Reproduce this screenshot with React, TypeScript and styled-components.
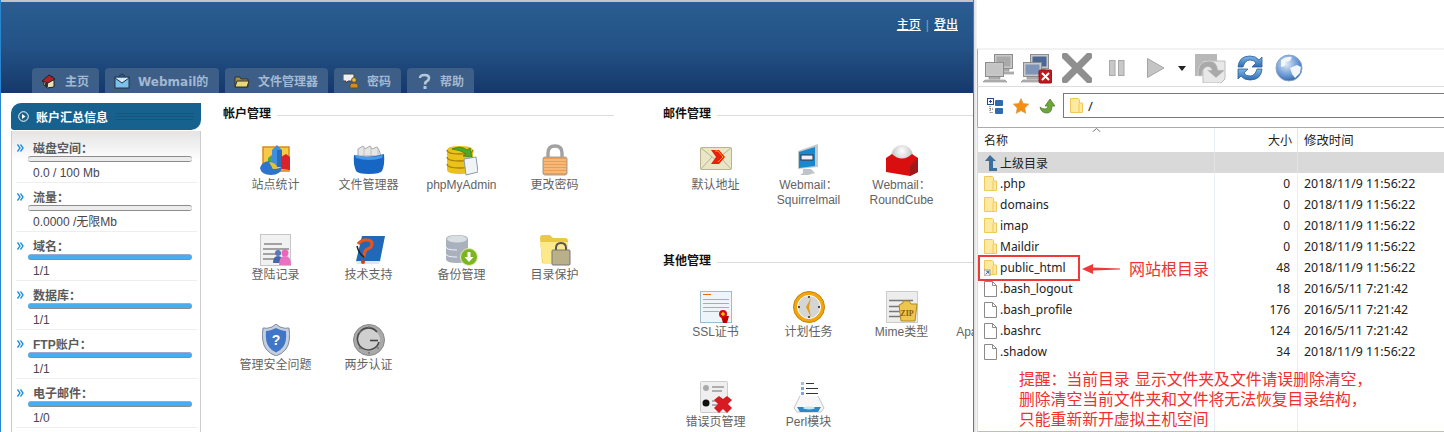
// App.tsx
import React from "react";
import styled, { createGlobalStyle } from "styled-components";

const GlobalStyle = createGlobalStyle`
  html, body {
    margin: 0;
    padding: 0;
    width: 1444px;
    height: 432px;
    overflow: hidden;
    background: #fff;
    font-family: "Liberation Sans", "Noto Sans CJK SC", sans-serif;
    font-size: 12px;
  }
`;

const Page = styled.div`
  display: flex;
  width: 1444px;
  height: 432px;
  overflow: hidden;
`;

/* ---------- left: control panel ---------- */

const PanelPane = styled.div`
  width: 972px;
  height: 432px;
  flex: none;
  box-sizing: content-box;
  border-left: 1px solid #2a86d0;
  border-right: 1px solid #2a86d0;
  overflow: hidden;
  display: flex;
  flex-direction: column;
`;

const Banner = styled.div`
  height: 91px;
  flex: none;
  border-top: 2px solid #c4c4c4;
  background: linear-gradient(#2a5d91, #235286 50%, #16386a);
  display: flex;
  flex-direction: column;
  justify-content: space-between;
`;

const TopLinks = styled.div`
  display: flex;
  justify-content: flex-end;
  align-items: center;
  gap: 5px;
  padding: 15px 15px 0 0;
  color: #7fa0c4;
  line-height: 16px;
`;

const TopLink = styled.a`
  color: #fff;
  text-decoration: underline;
  font-weight: 500;
`;

const Tabs = styled.div`
  display: flex;
  gap: 6px;
  padding-left: 31px;
`;

const Tab = styled.div<{ $w: number }>`
  width: ${(p) => p.$w}px;
  height: 25px;
  box-sizing: border-box;
  padding-left: 9px;
  background: #3c5e87;
  border-radius: 4px 4px 0 0;
  color: #a3b8d3;
  font-family: "DejaVu Sans", "Noto Sans CJK SC", sans-serif;
  font-weight: 700;
  display: flex;
  align-items: center;
  gap: 8px;
  white-space: nowrap;
`;

const PanelBody = styled.div`
  flex: 1;
  display: flex;
  min-height: 0;
`;

const Sidebar = styled.div`
  width: 190px;
  flex: none;
  margin: 10px 0 0 10px;
  display: flex;
  flex-direction: column;
`;

const SideHead = styled.div`
  height: 27px;
  flex: none;
  background: #17618f;
  border-radius: 10px 0 10px 3px;
  color: #fff;
  font-weight: 700;
  display: flex;
  align-items: center;
  padding-left: 7px;
  gap: 7px;
`;

const SideHeadRules = styled.div`
  flex: 1;
  height: 8px;
  margin-right: 7px;
  background: repeating-linear-gradient(#15567f 0 1px, transparent 1px 3px);
`;

const SideList = styled.div`
  flex: 1;
  margin-top: 1px;
  padding: 3px 3px 0 4px;
  border-left: 1px solid #ccc;
  border-right: 1px solid #ccc;
  background: linear-gradient(#e4e4e4, #fff 30px);
`;

const StatRow = styled.div`
  height: 49px;
  box-sizing: border-box;
  padding-top: 7px;
  border-bottom: 1px solid #eee;
`;

const StatHead = styled.div`
  display: flex;
  align-items: center;
  height: 14px;
  box-sizing: border-box;
  padding: 0 0 2px 1px;
  gap: 9px;
  color: #5a5a5a;
  font-weight: 700;
`;

const StatChevron = styled.svg`
  margin-top: 1px;
`;

const StatBar = styled.div<{ $full: boolean }>`
  width: 164px;
  height: 6px;
  box-sizing: border-box;
  margin: 1px 0 3px 12px;
  border-radius: 3px;
  border-bottom: 1px solid #8c8c8c;
  border-top: 1px solid ${(p) => (p.$full ? "#9ac" : "#8c8c8c")};
  background: ${(p) => (p.$full ? "#46aeee" : "#ececec")};
`;

const StatValue = styled.div`
  height: 14px;
  line-height: 17px;
  margin-left: 17px;
  color: #4a4450;
`;

const Content = styled.div`
  flex: 1;
  display: flex;
  gap: 49px;
  padding: 12px 0 0 22px;
  min-width: 0;
`;

const LeftColumn = styled.div`
  width: 391px;
  flex: none;
`;

const RightColumn = styled.div`
  width: 400px;
  flex: none;
`;

const SectionTitle = styled.div`
  display: flex;
  height: 14px;
  line-height: 19px;
  color: #111;
  font-weight: 700;
  gap: 6px;
  margin-bottom: 25px;
  white-space: nowrap;
`;

const TitleRule = styled.div`
  flex: 1;
  height: 1px;
  margin-top: 10px;
  background: #dcdcdc;
`;

const IconGrid = styled.div<{ $after?: number }>`
  display: grid;
  grid-template-columns: repeat(4, 93px);
  grid-auto-rows: 90px;
  margin-left: 6px;
  margin-bottom: ${(p) => p.$after ?? 0}px;
`;

const IconCell = styled.div`
  display: flex;
  flex-direction: column;
  align-items: center;
  text-align: center;
  color: #636363;
  line-height: 14.5px;
  white-space: nowrap;
`;

const IconBox = styled.div`
  height: 32px;
  margin-bottom: 2px;
  display: flex;
  align-items: center;
  justify-content: center;
`;

/* ---------- right: ftp client ---------- */

const ClientPane = styled.div`
  flex: 1;
  min-width: 0;
  height: 432px;
  position: relative;
  display: flex;
  overflow: hidden;
  font-family: "Noto Sans", "Noto Sans CJK SC", sans-serif;
`;

const EdgeShade = styled.div`
  width: 3px;
  flex: none;
  background: linear-gradient(90deg, #dcdcdc, #f6f6f6);
`;

const ClientMain = styled.div`
  flex: 1;
  min-width: 0;
  display: flex;
  flex-direction: column;
`;

const TitleGap = styled.div`
  height: 48px;
  flex: none;
`;

const Toolbar = styled.div`
  height: 36px;
  flex: none;
  display: flex;
  align-items: center;
  padding-left: 5px;
  border-top: 2px solid #f2f2f2;
  border-bottom: 1px solid #ddd;
  border-left: 1px solid #aaa;
`;

const ToolSlot = styled.div<{ $ml: number }>`
  margin-left: ${(p) => p.$ml}px;
  display: flex;
  align-items: center;
`;

const AddressRow = styled.div`
  height: 40px;
  flex: none;
  box-sizing: border-box;
  display: flex;
  align-items: center;
  gap: 10px;
  padding: 0 0 3px 9px;
  border-left: 1px solid #aaa;
`;

const AddressInput = styled.div`
  flex: 1;
  height: 25px;
  box-sizing: border-box;
  margin-left: -2px;
  margin-right: -2px;
  border: 1.5px solid #7a7a7a;
  display: flex;
  align-items: center;
  gap: 5px;
  padding-left: 6px;
  color: #123;
  font-size: 13px;
`;

const FileTable = styled.div`
  flex: 1;
  border-top: 1px solid #aaa;
  border-left: 1px solid #ddd;
  border-bottom: 1px solid #b7d45c;
  display: flex;
  flex-direction: column;
  position: relative;
`;

const SortCaret = styled.svg`
  position: absolute;
  left: 114px;
  top: 0;
`;

const GridRow = styled.div<{ $h: number; $bg?: string }>`
  height: ${(p) => p.$h}px;
  flex: none;
  display: grid;
  grid-template-columns: 237px 83px 1fr;
  background: ${(p) => p.$bg ?? "transparent"};
  color: #222;
`;

const NameCell = styled.div<{ $line?: string }>`
  display: flex;
  align-items: center;
  padding-left: 6px;
  gap: 3px;
  border-right: 1px solid ${(p) => p.$line ?? "#e8eef4"};
`;

const SizeCell = styled.div<{ $line?: string; $pad?: number }>`
  display: flex;
  align-items: center;
  justify-content: flex-end;
  padding-right: ${(p) => p.$pad ?? 7}px;
  border-right: 1px solid ${(p) => p.$line ?? "#e8eef4"};
`;

const DateCell = styled.div`
  display: flex;
  align-items: center;
  padding-left: 6px;
  white-space: nowrap;
  font-size: 12.4px;
`;

const FillColumns = styled(GridRow)`
  flex: 1;
`;

const FileIconBox = styled.div`
  width: 13px;
  height: 16px;
  flex: none;
  display: flex;
  align-items: center;
`;

const RedBox = styled.div`
  position: absolute;
  left: 4px;
  top: 255px;
  width: 102px;
  height: 26px;
  box-sizing: border-box;
  border: 2.5px solid #f03a3a;
`;

const RedArrow = styled.svg`
  position: absolute;
  left: 108px;
  top: 264px;
`;

const RootNote = styled.div`
  position: absolute;
  left: 155px;
  top: 257px;
  color: #f03030;
  font-family: "Noto Sans CJK SC", sans-serif;
  font-size: 16px;
  line-height: 22px;
  white-space: nowrap;
`;

const WarnNote = styled.div`
  position: absolute;
  left: 45px;
  top: 369px;
  color: #f03030;
  font-family: "Noto Sans CJK SC", sans-serif;
  font-size: 15.8px;
  line-height: 20px;
  word-spacing: 2px;
  white-space: nowrap;
`;

/* ---------- tab and sidebar drawings ---------- */

const HouseIcon = () => (
  <svg width="16" height="16" viewBox="0 0 16 16">
    <path d="M3 8l8-5 2 5v6l-7 1-3-3z" fill="#e9e2b8" stroke="#222" />
    <path d="M1 8l7-6 6 4-7 4z" fill="#b3202a" stroke="#222" />
    <rect x="4" y="10" width="3" height="4" fill="#333" />
  </svg>
);
const MailIcon = () => (
  <svg width="16" height="16" viewBox="0 0 16 16">
    <path d="M5 3l3-2 3 2" fill="none" stroke="#234" />
    <rect x="1" y="4" width="14" height="11" fill="#7cc0ec" stroke="#234" />
    <path d="M1 5l7 5 7-5" fill="#cfe8fa" stroke="#234" />
  </svg>
);
const FolderTabIcon = () => (
  <svg width="16" height="16" viewBox="0 0 16 16">
    <path d="M1 4h5l1 2h7v8H1z" fill="#a48f3e" stroke="#333" />
    <path d="M1 14l2-6h12l-2 6z" fill="#e8d87c" stroke="#333" />
  </svg>
);
const PasswordTabIcon = () => (
  <svg width="16" height="16" viewBox="0 0 16 16">
    <path d="M0 1h11v7H5l-2 2V8H0z" fill="#eee" stroke="#444" />
    <circle cx="11" cy="7" r="2.4" fill="#f1b43a" stroke="#553" />
    <path d="M7 15v-3q0-2 4-2t4 2v3z" fill="#d98a1f" stroke="#553" />
  </svg>
);
const HelpTabIcon = () => (
  <svg width="16" height="16" viewBox="0 0 16 16">
    <path d="M4 5q0-3 4.500-3T13 5q0 2-2.500 3.500Q9 9.300 9 11.500" fill="none" stroke="#b4c8dc" strokeWidth="2.600" />
    <rect x="7.500" y="13" width="3" height="3" fill="#b4c8dc" />
  </svg>
);
const PlayCircle = () => (
  <svg width="11" height="11" viewBox="0 0 11 11">
    <circle cx="5.500" cy="5.500" r="4.800" fill="none" stroke="#fff" />
    <path d="M4 3l3.500 2.500L4 8z" fill="#fff" />
  </svg>
);
const DoubleChevron = () => (
  <StatChevron width="7" height="8" viewBox="0 0 7 8">
    <path d="M.5.500L3 4 .5 7.500M3.500.500L6 4 3.500 7.500" fill="none" stroke="#1b8fdc" strokeWidth="1.300" />
  </StatChevron>
);

/* ---------- control panel drawings ---------- */

const StatsIcon = () => (
  <svg width="32" height="32" viewBox="0 0 32 32">
    <rect x="3" y="3" width="26" height="24" fill="#f6c948" stroke="#d98a1c" strokeWidth="1.500" />
    <path d="M8 14l5-4v12H8z" fill="#4aa84a" />
    <path d="M12 6l5-5 5 5v17H12z" fill="#3f8fe0" />
    <path d="M17 6h5v17h-5z" fill="#2c6cbc" />
    <path d="M21 13l5-3 4 3v13l-9-1z" fill="#d8232a" />
    <path d="M0 24q2-7 10-7l3 8q5 0 9-2-1 8-11 8T0 24z" fill="#2f74cc" />
    <path d="M9 18l4 7 5-1q-3-6-9-6z" fill="#e8c22c" />
  </svg>
);
const FileBoxIcon = () => (
  <svg width="32" height="32" viewBox="0 0 32 32">
    <path d="M5 12V5l5-3 2 3 5-3 2 3 5-2 2 3 2 6z" fill="#e6e6e6" stroke="#a8a8a8" />
    <path d="M11 3v8M18 3v8M25 4v7" stroke="#c0c0c0" />
    <path d="M1 11q14 4 30-1 1 11-2 17-2 3-13 3T3 27Q0 20 1 11z" fill="#1766c4" />
    <path d="M2 11q14 4 28 0l-1 3q-13 4-26 0z" fill="#4a9ae8" />
  </svg>
);
const PhpAdminIcon = () => (
  <svg width="32" height="32" viewBox="0 0 32 32">
    <path d="M1 6q0-4 13-4t13 4v20q0 4-13 4T1 26z" fill="#eac21a" />
    <path d="M1 6q0 4 13 4t13-4M1 13q0 4 13 4t13-4M1 20q0 4 13 4t13-4" fill="none" stroke="#a9810c" strokeWidth="1.300" />
    <path d="M6 5q9-4 15 1l3-2 2 9-9-1 3-2q-5-4-14-5z" fill="#4fa82e" stroke="#2f7a18" strokeWidth=".7" />
    <path d="M18 15l12-2 2 15-12 3z" fill="#f1f4f6" stroke="#8a9aa6" />
  </svg>
);
const LockIcon = () => (
  <svg width="32" height="32" viewBox="0 0 32 32">
    <path d="M9 14V9q0-7 7-7t7 7v5" fill="none" stroke="#a2a2a2" strokeWidth="3.400" />
    <rect x="4" y="13" width="24" height="18" rx="2" fill="#ed9c52" stroke="#a8a098" />
    <path d="M5 16h22M5 19h22M5 22h22M5 25h22M5 28h22" stroke="#fbd6a4" />
  </svg>
);
const LoginLogIcon = () => (
  <svg width="32" height="32" viewBox="0 0 32 32">
    <rect x=".5" y=".5" width="30" height="31" fill="#f1f1f1" stroke="#c6c6c6" />
    <path d="M4 10h18M3 15h26M3 20h18M3 25h14" stroke="#888" strokeWidth="1.400" />
    <circle cx="18" cy="19" r="3" fill="#5a78b8" />
    <path d="M13 29q0-7 5-7t5 7z" fill="#4466aa" />
    <circle cx="25" cy="19" r="3.500" fill="#e866b8" />
    <path d="M19 31q0-9 6-9t6 9z" fill="#ec70c2" />
  </svg>
);
const BookIcon = () => (
  <svg width="32" height="32" viewBox="0 0 32 32">
    <path d="M9 2h23l-5 25H3z" fill="#2168b8" />
    <path d="M3 27h24l-1 3H4z" fill="#dfe6ee" />
    <path d="M5 10q4-5 10-4t3 7l-5 3q-2 2-2 7" fill="none" stroke="#e4561c" strokeWidth="3.200" />
    <path d="M4 12q2 8 7 11" fill="none" stroke="#222" strokeWidth="1.500" />
    <circle cx="10" cy="28" r="2" fill="#d23f12" />
  </svg>
);
const BackupIcon = () => (
  <svg width="32" height="32" viewBox="0 0 32 32">
    <path d="M0 5q0-4 11-4t11 4v20q0 4-11 4T0 25z" fill="#a9b2bc" />
    <ellipse cx="11" cy="5" rx="10" ry="3.500" fill="#d9dee3" />
    <path d="M0 13q0 3 11 3M0 20q0 3 11 3" fill="none" stroke="#eef" />
    <circle cx="23" cy="23" r="8.500" fill="#7cb51e" stroke="#e4f0c0" />
    <path d="M21.500 18h3v5h3l-4.500 5-4.500-5h3z" fill="#fff" />
  </svg>
);
const ProtectIcon = () => (
  <svg width="32" height="32" viewBox="0 0 32 32">
    <path d="M1 4q0-3 3-3h7l3 3h12q3 0 3 3v22H3z" fill="#e9c84a" />
    <path d="M1 8h28l1 22H4z" fill="#fbe98a" />
    <path d="M17 17v-3q0-5 5-5t5 5v3" fill="none" stroke="#555" strokeWidth="2" />
    <rect x="13" y="16" width="18" height="15" rx="1" fill="#b9b08a" stroke="#777" />
  </svg>
);
const ShieldIcon = () => (
  <svg width="32" height="32" viewBox="0 0 32 32">
    <path d="M16 0l4 3q5 2 9 1 2 14-3 21-4 5-10 7-6-2-10-7Q1 18 3 4q4 1 9-1z" fill="#c6cfe0" stroke="#7d88a0" />
    <path d="M16 4q6 3 10 3 1 11-3 16-3 4-7 5.500Q12 27 9 23 5 18 6 7q4 0 10-3z" fill="#3f76c8" />
    <text x="16" y="21" fontSize="14" fontWeight="700" fill="#fff" textAnchor="middle" fontFamily="Liberation Sans, sans-serif">?</text>
  </svg>
);
const TwoStepIcon = () => (
  <svg width="32" height="32" viewBox="0 0 32 32">
    <circle cx="16" cy="16" r="15.500" fill="#a9a9a9" stroke="#8a8a8a" />
    <circle cx="16" cy="16" r="11" fill="#cfcfcf" />
    <path d="M24 8a11 11 0 1 0 2 10" fill="none" stroke="#4a4a4a" strokeWidth="1.600" />
    <path d="M17 16.500h8" stroke="#444" strokeWidth="1.600" />
    <circle cx="7" cy="8" r="1" fill="#777" />
    <circle cx="25" cy="24" r="1" fill="#777" />
    <circle cx="7" cy="24" r="1" fill="#777" />
    <circle cx="16" cy="3" r="1" fill="#777" />
    <circle cx="16" cy="29" r="1" fill="#777" />
  </svg>
);
const EnvelopeIcon = () => (
  <svg width="32" height="26" viewBox="0 0 32 26">
    <rect x=".5" y=".5" width="31" height="22" rx="1" fill="#e9e6c8" stroke="#b8b48e" />
    <path d="M1 1l15 12L31 1M1 22l11-12M31 22L20 10" fill="none" stroke="#b8b48e" />
    <path d="M11 3h8l6 7-6 7h-8l5-7z" fill="#e8200c" />
    <path d="M15 4h3l5 6-5 5" fill="none" stroke="#f7a21a" />
  </svg>
);
const MonitorIcon = () => (
  <svg width="32" height="32" viewBox="0 0 32 32">
    <path d="M5 7l20-7v23L5 25z" fill="#c4c9cc" />
    <path d="M6 8l16-5v19L6 24z" fill="#1a88d0" />
    <rect x="8" y="11" width="12" height="5" fill="#eef" stroke="#333" />
    <path d="M10 25h8l4 4-7 2H7l3-2z" fill="#bfc4c6" />
  </svg>
);
const CubeIcon = () => (
  <svg width="32" height="32" viewBox="0 0 32 32">
    <defs>
      <radialGradient id="dome" cx=".5" cy=".25" r=".7">
        <stop offset="0" stopColor="#fff" />
        <stop offset="1" stopColor="#aaa" />
      </radialGradient>
    </defs>
    <ellipse cx="16" cy="13" rx="11" ry="12" fill="url(#dome)" />
    <path d="M0 14l6-4q10 9 20 0l6 4v14l-8 4-24-4z" fill="#d90f0f" />
    <path d="M24 22l8-8v14l-8 4z" fill="#9e1a1a" />
  </svg>
);
const CertIcon = () => (
  <svg width="32" height="32" viewBox="0 0 32 32">
    <rect x=".5" y=".5" width="31" height="31" fill="#eef5fa" stroke="#9dbccc" />
    <path d="M3 3.500h8" stroke="#f06a00" />
    <path d="M3 8.500h26M3 12.500h26M3 16.500h26M3 20.500h16" stroke="#8fb4cc" />
    <path d="M21 25l2 7h4l2-7z" fill="#b00" />
    <circle cx="23" cy="23" r="4" fill="#cc1010" />
    <path d="M21 23h4M23 21v4" stroke="#ff0" />
  </svg>
);
const ClockIcon = () => (
  <svg width="32" height="32" viewBox="0 0 32 32">
    <circle cx="16" cy="16" r="15.500" fill="#f2a50c" stroke="#c98305" />
    <circle cx="16" cy="16" r="11.500" fill="#d5d5d5" stroke="#fff" />
    <path d="M18 7l-5 9 5 10-2-10z" fill="#e79a0a" />
    <circle cx="16" cy="6" r="1" fill="#333" />
    <circle cx="6" cy="16" r="1" fill="#222" />
    <circle cx="26" cy="16" r="1" fill="#222" />
    <circle cx="16" cy="26" r="1" fill="#333" />
  </svg>
);
const MimeIcon = () => (
  <svg width="32" height="32" viewBox="0 0 32 32">
    <rect x=".5" y=".5" width="31" height="31" fill="#ededed" stroke="#ccc" />
    <path d="M3 9.500h24M3 15.500h12M3 20.500h12M3 25.500h12" stroke="#777" strokeWidth="1.400" />
    <path d="M13 14l4-2v-2h6l2 3h6l-2 17H15z" fill="#efc64d" stroke="#b08a22" />
    <text x="21" y="25" fontSize="8" fontWeight="700" fill="#8a5a10" textAnchor="middle" fontFamily="Liberation Serif, serif">ZIP</text>
  </svg>
);
const ErrorPageIcon = () => (
  <svg width="32" height="32" viewBox="0 0 32 32">
    <rect x=".5" y=".5" width="27" height="31" rx="1" fill="#efefef" stroke="#ccc" />
    <circle cx="6" cy="7" r="3" fill="#aaa" />
    <circle cx="6" cy="22" r="3.500" fill="#111" />
    <path d="M12 6h12M12 10h10M12 20h6M12 24h6" stroke="#999" strokeWidth="1.300" />
    <path d="M19 15l4 3 4-3 5 4-4 4 4 4-5 5-4-4-4 4-5-5 4-4-4-4z" fill="#d81b22" />
  </svg>
);
const PerlIcon = () => (
  <svg width="32" height="32" viewBox="0 0 32 32">
    <rect x="8" y="1" width="3" height="3" fill="#9cc0e6" />
    <rect x="8" y="6" width="3" height="3" fill="#7aa8dc" />
    <rect x="8" y="11" width="3" height="3" fill="#7aa8dc" />
    <path d="M13 2.500h8M13 7.500h12M13 12.500h12" stroke="#333" />
    <path d="M7 15L1 27l3 4h24l3-4-6-12" fill="#f7f7f7" stroke="#c4c4c4" />
    <path d="M4 26h24l-3 5H7z" fill="#2a88c8" />
    <ellipse cx="16" cy="27" rx="6" ry="1.500" fill="#bfe8ff" />
  </svg>
);

/* ---------- ftp client drawings ---------- */

const Pc = ({ x, y, fill }: { x: number; y: number; fill: string }) => (
  <g transform={`translate(${x} ${y})`}>
    <rect x=".5" y=".5" width="18" height="14" fill="#c8c8c8" stroke="#8d8d8d" />
    <rect x="2.500" y="2.500" width="14" height="10" fill={fill} />
    <path d="M4 15h11v2H4zM0 18h20l2 2H-2z" fill="#bbb" stroke="#888" strokeWidth=".6" />
  </g>
);
const ConnectIcon = () => (
  <svg width="31" height="30" viewBox="0 0 31 30">
    <Pc x={11} y={1} fill="#a9a9a9" />
    <Pc x={2} y={9} fill="#c4c4c4" />
  </svg>
);
const DisconnectIcon = () => (
  <svg width="31" height="31" viewBox="0 0 31 31">
    <Pc x={9} y={1} fill="#4a6796" />
    <Pc x={2} y={9} fill="#7e94b8" />
    <rect x="18" y="17" width="13" height="13" rx="1.500" fill="#c5161d" stroke="#8a0f14" />
    <path d="M21 20l7 7M28 20l-7 7" stroke="#fff" strokeWidth="2" />
  </svg>
);
const StopIcon = () => (
  <svg width="30" height="30" viewBox="0 0 30 30">
    <path d="M3 3l24 24M27 3L3 27" stroke="#8f8f8f" strokeWidth="7" strokeLinecap="round" />
  </svg>
);
const PauseIcon = () => (
  <svg width="16" height="16" viewBox="0 0 16 16">
    <rect x=".5" y=".5" width="5.500" height="15" fill="#c8c8c8" stroke="#a8a8a8" />
    <rect x="9.500" y=".5" width="5.500" height="15" fill="#c8c8c8" stroke="#a8a8a8" />
  </svg>
);
const PlayIcon = () => (
  <svg width="18" height="20" viewBox="0 0 18 20">
    <path d="M.5.500L17 10 .5 19.500z" fill="#c4c4c4" stroke="#a5a5a5" />
  </svg>
);
const CaretIcon = () => (
  <svg width="8" height="5" viewBox="0 0 8 5">
    <path d="M0 0h8L4 5z" fill="#222" />
  </svg>
);
const TransferIcon = () => (
  <svg width="31" height="30" viewBox="0 0 31 30">
    <rect x="0" y="1" width="22" height="22" fill="#b8b8b8" />
    <path d="M8 8h22v18l-4 4H8z" fill="#e8e8e8" stroke="#bdbdbd" />
    <path d="M3 23q-1-15 11-15 8 0 9 9h7l-9 8-9-8h5q-2-4-5-3-5 1-5 9z" fill="#a9a9a9" stroke="#ddd" strokeWidth=".6" />
  </svg>
);
const RefreshIcon = () => (
  <svg width="28" height="28" viewBox="0 0 28 28">
    <defs>
      <linearGradient id="spin" x1="0" y1="0" x2="0" y2="1">
        <stop offset="0" stopColor="#7fb4e6" />
        <stop offset="1" stopColor="#2f6db0" />
      </linearGradient>
    </defs>
    <path d="M2 13Q3 2 14 2q6 0 9 4l3-3v10H16l4-4q-2-3-6-3-5 0-7 7z" fill="url(#spin)" stroke="#2a5f9a" strokeWidth=".8" />
    <path d="M26 15q-1 11-12 11-6 0-9-4l-3 3V15h10l-4 4q2 3 6 3 5 0 7-7z" fill="url(#spin)" stroke="#2a5f9a" strokeWidth=".8" />
  </svg>
);
const GlobeIcon = () => (
  <svg width="28" height="28" viewBox="0 0 28 28">
    <defs>
      <radialGradient id="globe" cx=".4" cy=".35" r=".7">
        <stop offset="0" stopColor="#dfe9f5" />
        <stop offset=".7" stopColor="#5c8fd0" />
        <stop offset="1" stopColor="#2f5f9e" />
      </radialGradient>
    </defs>
    <circle cx="14" cy="14" r="13" fill="url(#globe)" stroke="#8aa4c8" />
    <path d="M6 6q5-4 11-3l-2 4-4 1-1 4-4 1zM15 14l7-3 4 2-1 6-5 5-3-4z" fill="#f2f5f9" />
  </svg>
);
const TreeIcon = () => (
  <svg width="16" height="16" viewBox="0 0 16 16">
    <rect x=".5" y=".5" width="6" height="6" fill="#fff" stroke="#1f4f8c" />
    <path d="M2 3.500h3M3.500 2v3" stroke="#1f4f8c" />
    <path d="M3 8v6.500h3M3 11h3" stroke="#555" strokeDasharray="1 1" fill="none" />
    <rect x="8" y="2" width="8" height="6" rx="1" fill="#2f6cae" />
    <rect x="8" y="10" width="8" height="6" rx="1" fill="#2f6cae" />
  </svg>
);
const StarIcon = () => (
  <svg width="16" height="16" viewBox="0 0 16 16">
    <path d="M8 .5l2.300 5 5.500.6-4 3.800 1.100 5.500L8 12.700l-4.900 2.700 1.100-5.500-4-3.800 5.500-.6z" fill="#f58d10" stroke="#c9a060" strokeWidth=".6" />
  </svg>
);
const GreenUpIcon = () => (
  <svg width="16" height="16" viewBox="0 0 16 16">
    <path d="M1 9q1 6 7 6 5 0 5-7h3l-5-7-5 7h3q0 3-3 3-3 0-5-2z" fill="#6fa63a" stroke="#44752a" strokeWidth=".7" />
  </svg>
);
const FolderIcon = ({ link }: { link?: boolean }) => (
  <svg width="13" height="16" viewBox="0 0 13 16">
    <path d="M.5.500h8l1 1v3.500h3v9.500H.5z" fill="#fde9a0" stroke="#efc95a" />
    <path d="M9 5.500v9" stroke="#efc95a" />
    {link && (
      <g>
        <rect x="0" y="10" width="6" height="6" fill="#eef" stroke="#666" strokeWidth=".6" />
        <path d="M1.500 14.500l3-3M2.500 11.500h2v2" stroke="#24578c" strokeWidth=".8" fill="none" />
      </g>
    )}
  </svg>
);
const FileIcon = () => (
  <svg width="13" height="16" viewBox="0 0 13 16">
    <path d="M.5.500h8l4 4v11H.5z" fill="#fff" stroke="#8a8a8a" />
    <path d="M8.500.5v4h4" fill="none" stroke="#8a8a8a" />
  </svg>
);
const UpDirIcon = () => (
  <svg width="13" height="16" viewBox="0 0 13 16">
    <path d="M6 0l6 6H9v7h4v3H5V6H1z" fill="#3d6e9c" />
  </svg>
);

/* ---------- data ---------- */

const tabs = [
  { label: "主页", w: 67, icon: <HouseIcon /> },
  { label: "Webmail的", w: 114, icon: <MailIcon /> },
  { label: "文件管理器", w: 103, icon: <FolderTabIcon /> },
  { label: "密码", w: 67, icon: <PasswordTabIcon /> },
  { label: "帮助", w: 67, icon: <HelpTabIcon /> },
];

const stats = [
  { label: "磁盘空间：", value: "0.0 / 100 Mb", full: false },
  { label: "流量：", value: "0.0000 /无限Mb", full: false },
  { label: "域名：", value: "1/1", full: true },
  { label: "数据库：", value: "1/1", full: true },
  { label: "FTP账户：", value: "1/1", full: true },
  { label: "电子邮件：", value: "1/0", full: true },
];

const accountTools = [
  { label: "站点统计", icon: <StatsIcon /> },
  { label: "文件管理器", icon: <FileBoxIcon /> },
  { label: "phpMyAdmin", icon: <PhpAdminIcon /> },
  { label: "更改密码", icon: <LockIcon /> },
  { label: "登陆记录", icon: <LoginLogIcon /> },
  { label: "技术支持", icon: <BookIcon /> },
  { label: "备份管理", icon: <BackupIcon /> },
  { label: "目录保护", icon: <ProtectIcon /> },
  { label: "管理安全问题", icon: <ShieldIcon /> },
  { label: "两步认证", icon: <TwoStepIcon /> },
];

const mailTools = [
  { label: "默认地址", icon: <EnvelopeIcon /> },
  { label: <>Webmail：<br />Squirrelmail</>, icon: <MonitorIcon /> },
  { label: <>Webmail：<br />RoundCube</>, icon: <CubeIcon /> },
];

const otherTools = [
  { label: "SSL证书", icon: <CertIcon /> },
  { label: "计划任务", icon: <ClockIcon /> },
  { label: "Mime类型", icon: <MimeIcon /> },
  { label: "Apache处理器", icon: null },
  { label: "错误页管理", icon: <ErrorPageIcon /> },
  { label: "Perl模块", icon: <PerlIcon /> },
];

const files = [
  { name: ".php", size: "0", date: "2018/11/9 11:56:22", kind: "folder" },
  { name: "domains", size: "0", date: "2018/11/9 11:56:22", kind: "folder" },
  { name: "imap", size: "0", date: "2018/11/9 11:56:22", kind: "folder" },
  { name: "Maildir", size: "0", date: "2018/11/9 11:56:22", kind: "folder" },
  { name: "public_html", size: "48", date: "2018/11/9 11:56:22", kind: "link" },
  { name: ".bash_logout", size: "18", date: "2016/5/11 7:21:42", kind: "file" },
  { name: ".bash_profile", size: "176", date: "2016/5/11 7:21:42", kind: "file" },
  { name: ".bashrc", size: "124", date: "2016/5/11 7:21:42", kind: "file" },
  { name: ".shadow", size: "34", date: "2018/11/9 11:56:22", kind: "file" },
];

const ToolGrid = ({ items, after }: { items: { label: React.ReactNode; icon: React.ReactNode }[]; after?: number }) => (
  <IconGrid $after={after}>
    {items.map((item, i) => (
      <IconCell key={i}>
        <IconBox>{item.icon}</IconBox>
        <div>{item.label}</div>
      </IconCell>
    ))}
  </IconGrid>
);

export default function App() {
  return (
    <Page>
      <GlobalStyle />
      <PanelPane>
        <Banner>
          <TopLinks>
            <TopLink>主页</TopLink>|<TopLink>登出</TopLink>
          </TopLinks>
          <Tabs>
            {tabs.map((t) => (
              <Tab key={t.label} $w={t.w}>
                {t.icon}
                {t.label}
              </Tab>
            ))}
          </Tabs>
        </Banner>
        <PanelBody>
          <Sidebar>
            <SideHead>
              <PlayCircle />
              账户汇总信息
              <SideHeadRules />
            </SideHead>
            <SideList>
              {stats.map((s) => (
                <StatRow key={s.label}>
                  <StatHead>
                    <DoubleChevron />
                    {s.label}
                  </StatHead>
                  <StatBar $full={s.full} />
                  <StatValue>{s.value}</StatValue>
                </StatRow>
              ))}
            </SideList>
          </Sidebar>
          <Content>
            <LeftColumn>
              <SectionTitle>
                帐户管理
                <TitleRule />
              </SectionTitle>
              <ToolGrid items={accountTools} />
            </LeftColumn>
            <RightColumn>
              <SectionTitle>
                邮件管理
                <TitleRule />
              </SectionTitle>
              <ToolGrid items={mailTools} after={18} />
              <SectionTitle>
                其他管理
                <TitleRule />
              </SectionTitle>
              <ToolGrid items={otherTools} />
            </RightColumn>
          </Content>
        </PanelBody>
      </PanelPane>

      <ClientPane>
        <EdgeShade />
        <ClientMain>
          <TitleGap />
          <Toolbar>
            <ToolSlot $ml={0}><ConnectIcon /></ToolSlot>
            <ToolSlot $ml={7}><DisconnectIcon /></ToolSlot>
            <ToolSlot $ml={10}><StopIcon /></ToolSlot>
            <ToolSlot $ml={17}><PauseIcon /></ToolSlot>
            <ToolSlot $ml={22}><PlayIcon /></ToolSlot>
            <ToolSlot $ml={13}><CaretIcon /></ToolSlot>
            <ToolSlot $ml={9}><TransferIcon /></ToolSlot>
            <ToolSlot $ml={10}><RefreshIcon /></ToolSlot>
            <ToolSlot $ml={11}><GlobeIcon /></ToolSlot>
          </Toolbar>
          <AddressRow>
            <TreeIcon />
            <StarIcon />
            <GreenUpIcon />
            <AddressInput>
              <FolderIcon />/
            </AddressInput>
          </AddressRow>
          <FileTable>
            <SortCaret width="9" height="4" viewBox="0 0 9 4">
              <path d="M.5 4l4-3.500L8.500 4" fill="none" stroke="#777" />
            </SortCaret>
            <GridRow $h={24}>
              <NameCell>名称</NameCell>
              <SizeCell $line="#e6e6e6" $pad={5}>大小</SizeCell>
              <DateCell>修改时间</DateCell>
            </GridRow>
            <GridRow $h={21} $bg="#d9d9d9">
              <NameCell $line="#e2e2e2">
                <FileIconBox><UpDirIcon /></FileIconBox>
                上级目录
              </NameCell>
              <SizeCell $line="#e2e2e2" />
              <DateCell />
            </GridRow>
            {files.map((f) => (
              <GridRow $h={21} key={f.name}>
                <NameCell>
                  <FileIconBox>
                    {f.kind === "file" ? <FileIcon /> : <FolderIcon link={f.kind === "link"} />}
                  </FileIconBox>
                  {f.name}
                </NameCell>
                <SizeCell>{f.size}</SizeCell>
                <DateCell>{f.date}</DateCell>
              </GridRow>
            ))}
            <FillColumns $h={0}>
              <NameCell />
              <SizeCell />
              <DateCell />
            </FillColumns>
          </FileTable>
        </ClientMain>
        <RedBox />
        <RedArrow width="38" height="10" viewBox="0 0 38 10">
          <path d="M0 5l11-5v3.500l27 1v1l-27 1V10z" fill="#f03a3a" />
        </RedArrow>
        <RootNote>网站根目录</RootNote>
        <WarnNote>
          提醒：当前目录 显示文件夹及文件请误删除清空，
          <br />
          删除清空当前文件夹和文件将无法恢复目录结构，
          <br />
          只能重新新开虚拟主机空间
        </WarnNote>
      </ClientPane>
    </Page>
  );
}
